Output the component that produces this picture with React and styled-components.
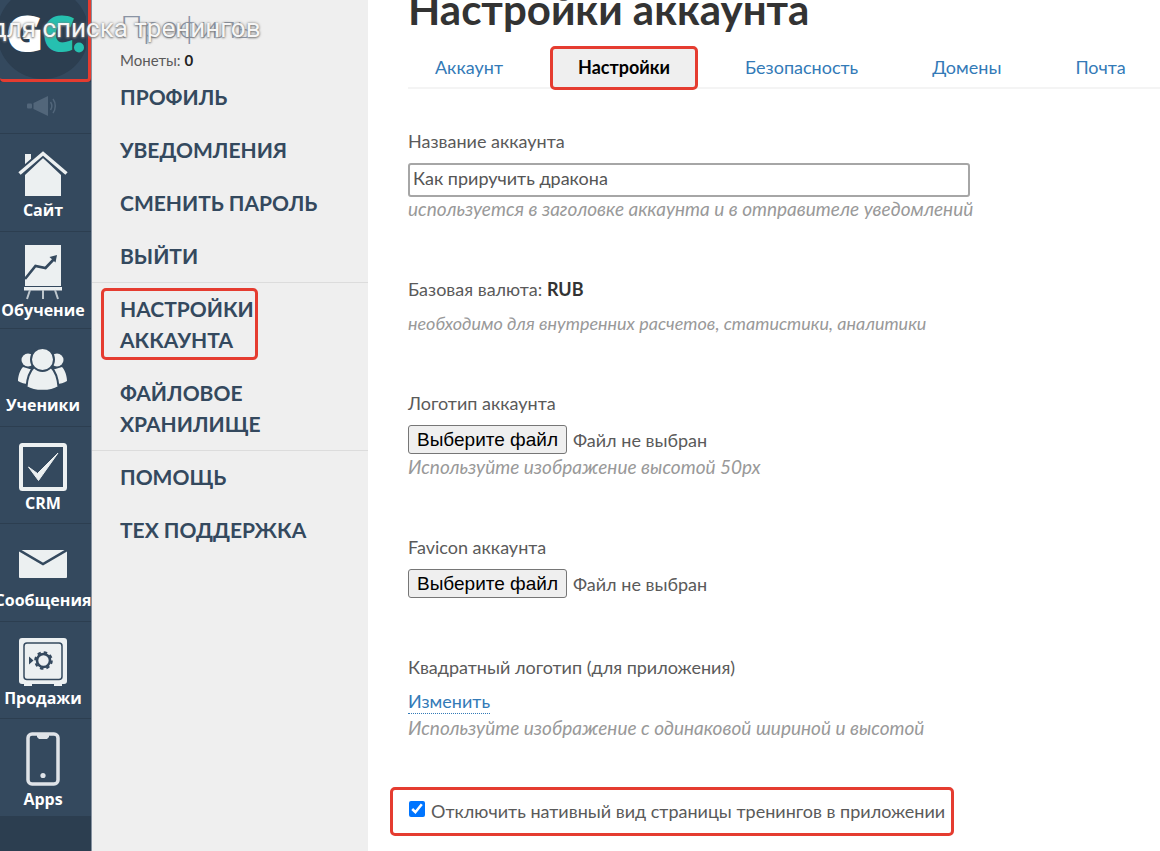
import { useRef, useState } from "react";
import styled, { createGlobalStyle } from "styled-components";

const GlobalStyle = createGlobalStyle`
  * {
    box-sizing: border-box;
  }
  body {
    margin: 0;
    background-color: #fff;
    color: #5a5a5a;
    font-family: "Lato", "Open Sans", sans-serif;
    font-size: 18px;
    line-height: 24px;
  }
`

const HouseIcon = () => (
  <svg width="50" height="46" viewBox="0 0 50 46" fill="#ecf0f1">
    <path d="M7 3h6v6l-6 6z" />
    <path d="M7 24 25 7l18 17v21H7z" />
    <path d="M1.500 22.500 25 2l23.500 20.500" fill="none" stroke="#34495e" strokeWidth="7" />
    <path d="M1.500 22.500 25 2.500l23.500 20" fill="none" stroke="#ecf0f1" strokeWidth="3.500" />
  </svg>
)

const BoardIcon = () => (
  <svg width="40" height="56" viewBox="0 0 40 56">
    <path d="M2 0h36v41H2z" fill="#ecf0f1" />
    <path d="M1 42h38v3.500H1z" fill="#ecf0f1" />
    <path d="M7 45 4 54M20 45v9M32 45l3 9" stroke="#bdc6cc" strokeWidth="2" />
    <path d="M2 34 12.500 21l10 2L32 13" fill="none" stroke="#34495e" strokeWidth="2.600" />
    <path d="m34 10-1.500 7.500-6-5.500z" fill="#34495e" />
  </svg>
)

const UsersIcon = () => (
  <svg width="50" height="43" viewBox="0 0 50 43" fill="#ecf0f1">
    <circle cx="10" cy="12" r="6.500" />
    <circle cx="39" cy="12" r="6.500" />
    <path d="M5 19c-3 3-5 9-5 14 3 2 7 3 10 3l5-14zM44 19c3 3 5 9 5 14-3 2-7 3-10 3l-5-14z" />
    <path d="M16 19h17c5 5 7 13 7.500 20-8 5-24 5-32 0C9 32 11 24 16 19z" stroke="#34495e" strokeWidth="2" />
    <circle cx="24.500" cy="11.500" r="11.500" stroke="#34495e" strokeWidth="2" />
  </svg>
)

const CheckIcon = () => (
  <svg width="48" height="48" viewBox="0 0 48 48">
    <rect x="2" y="2" width="44" height="44" rx="1.500" fill="none" stroke="#ecf0f1" strokeWidth="4" />
    <path d="m9.500 24 9 6.500L39 10 19.500 37.500z" fill="#ecf0f1" stroke="#ecf0f1" />
  </svg>
)

const MailIcon = () => (
  <svg width="48" height="28" viewBox="0 0 48 28">
    <rect width="48" height="28" rx="1" fill="#ecf0f1" />
    <path d="M0 0 24 14 48 0" fill="none" stroke="#34495e" strokeWidth="2.500" />
  </svg>
)

const SafeIcon = () => (
  <svg width="48" height="48" viewBox="0 0 48 48">
    <rect width="48" height="46" rx="3" fill="#ecf0f1" />
    <path d="M5 46h8v2H5zM35 46h8v2h-8z" fill="#ecf0f1" />
    <rect x="5" y="5" width="38" height="36.500" rx="3" fill="none" stroke="#34495e" strokeWidth="1.500" />
    <circle cx="24.500" cy="22.500" r="6.500" fill="none" stroke="#34495e" strokeWidth="2.600" />
    <circle cx="24.500" cy="22.500" r="8.300" fill="none" stroke="#34495e" strokeWidth="2" strokeDasharray="3.500 3.020" />
    <path d="m10 18.500 4.500 4-4.500 4z" fill="#34495e" />
  </svg>
)

const PhoneIcon = () => (
  <svg width="34" height="58" viewBox="0 0 34 58">
    <rect x="2" y="2" width="30" height="50" rx="4" fill="none" stroke="#dfe3e8" strokeWidth="3.500" />
    <path d="M11 2h12v3l-2 2h-8l-2-2z" fill="#dfe3e8" />
    <circle cx="17" cy="43.500" r="2.600" fill="#dfe3e8" />
  </svg>
)

const MegaphoneIcon = () => (
  <svg width="32" height="20" viewBox="0 0 32 20" fill="#52667a">
    <rect x="1" y="7.500" width="5" height="5" rx="1" />
    <path d="M7.500 7 22 0v20L7.500 13z" />
    <path d="M24.500 6c1.700 2.500 1.700 5.500 0 8M27 3c3 4 3 10 0 14" fill="none" stroke="#52667a" strokeWidth="1.500" />
  </svg>
)

const GcLogo = () => (
  <svg width="86" height="80" viewBox="0 0 86 80" fontFamily="Open Sans" fontWeight="800" fontSize="48">
    <circle cx="43" cy="33" r="46" fill="#2c3e50" />
    <text x="7" y="51" fill="#fff" stroke="#fff" strokeWidth="2">G</text>
    <text x="43" y="51" fill="#26c0b0" stroke="#26c0b0" strokeWidth="2">C</text>
    <circle cx="79" cy="47.500" r="5" fill="#26c0b0" />
  </svg>
)

const railItems = [
  { title: "Сайт", Icon: HouseIcon },
  { title: "Обучение", Icon: BoardIcon },
  { title: "Ученики", Icon: UsersIcon },
  { title: "CRM", Icon: CheckIcon },
  { title: "Сообщения", Icon: MailIcon },
  { title: "Продажи", Icon: SafeIcon },
  { title: "Apps", Icon: PhoneIcon },
]

const tabs = ["Аккаунт", "Настройки", "Безопасность", "Домены", "Почта"]

// the native file input stays hidden, the button opens it and the name is shown next to it
const FilePicker = ({ id }) => {
  const input = useRef(null)
  const [fileName, setFileName] = useState("Файл не выбран")
  return (
    <FileRow>
      <input
        ref={input}
        id={id}
        type="file"
        hidden
        onChange={(e) => setFileName(e.target.files[0] ? e.target.files[0].name : "Файл не выбран")}
      />
      <FileButton type="button" onClick={() => input.current.click()}>Выберите файл</FileButton>
      <span>{fileName}</span>
    </FileRow>
  )
}

const App = () => {
  const [activeTab, setActiveTab] = useState("Настройки")
  return (
    <Page>
      <GlobalStyle />
      <Rail>
        <LogoLink href="#" aria-label="GetCourse"><GcLogo /></LogoLink>
        <NewsLink href="#" aria-label="Новости"><MegaphoneIcon /></NewsLink>
        <RailList>
          {railItems.map(({ title, Icon }) => (
            <RailLink href="#" key={title}>
              <RailIcon><Icon /></RailIcon>
              <RailTitle>{title}</RailTitle>
            </RailLink>
          ))}
        </RailList>
      </Rail>

      <Panel>
        <PanelTitle>Профиль</PanelTitle>
        <Coins>Монеты: <b>0</b></Coins>
        <MenuGroup>
          <MenuLink href="#">Профиль</MenuLink>
          <MenuLink href="#">Уведомления</MenuLink>
          <MenuLink href="#">Сменить пароль</MenuLink>
          <MenuLink href="#">Выйти</MenuLink>
        </MenuGroup>
        <MenuGroup $divided>
          <MenuLink href="#">
            Настройки<br />аккаунта
            <MenuMark />
          </MenuLink>
          <MenuLink href="#">Файловое<br />хранилище</MenuLink>
        </MenuGroup>
        <MenuGroup $divided>
          <MenuLink href="#">Помощь</MenuLink>
          <MenuLink href="#">Тех поддержка</MenuLink>
        </MenuGroup>
      </Panel>

      <Main>
        <Title>Настройки аккаунта</Title>
        <Tabs>
          {tabs.map((tab) => (
            <Tab key={tab} href="#" $active={tab === activeTab} onClick={() => setActiveTab(tab)}>{tab}</Tab>
          ))}
        </Tabs>
        <Form>
          <Field>
            <Label htmlFor="name">Название аккаунта</Label>
            <TextInput id="name" type="text" defaultValue="Как приручить дракона" />
            <Hint>используется в заголовке аккаунта и в отправителе уведомлений</Hint>
          </Field>
          <Field>
            <Label as="div">Базовая валюта: <Strong>RUB</Strong></Label>
            <Hint $small>необходимо для внутренних расчетов, статистики, аналитики</Hint>
          </Field>
          <Field>
            <Label htmlFor="logo">Логотип аккаунта</Label>
            <FilePicker id="logo" />
            <Hint>Используйте изображение высотой 50px</Hint>
          </Field>
          <Field>
            <Label htmlFor="favicon">Favicon аккаунта</Label>
            <FilePicker id="favicon" />
          </Field>
          <Field>
            <Label as="div">Квадратный логотип (для приложения)</Label>
            <EditLink href="#">Изменить</EditLink>
            <Hint>Используйте изображение с одинаковой шириной и высотой</Hint>
          </Field>
        </Form>
        <CheckRow>
          <Checkbox type="checkbox" defaultChecked />
          Отключить нативный вид страницы тренингов в приложении
        </CheckRow>
      </Main>

      <Caption>для списка тренингов</Caption>
    </Page>
  )
}

const Page = styled.div`
  position: relative;
  display: flex;
  min-height: 100vh;
  overflow: hidden;
`

const Rail = styled.nav`
  flex: 0 0 92px;
  overflow: hidden;
  background-color: #2c3e50;
  border-right: 1px solid #8591a0;
`

const LogoLink = styled.a`
  display: block;
  height: 82px;
  overflow: hidden;
  background-color: #34495e;
  border: 3px solid #e53c30;
  border-width: 0 3px 3px 0;
  border-radius: 0 0 4px 4px;
`

const NewsLink = styled.a`
  display: flex;
  align-items: center;
  justify-content: center;
  height: 51px;
  padding: 0 8px 3px 0;
  background-color: #34495e;
`

const RailList = styled.div`
  display: flex;
  flex-direction: column;
  height: 683px;
`

const RailLink = styled.a`
  flex: 1;
  display: flex;
  flex-direction: column;
  align-items: center;
  padding: 13px 5px 0 0;
  background-color: #34495e;
  border-top: 1px solid #2c3e50;
  color: #fff;
  text-decoration: none;
`

const RailIcon = styled.span`
  display: flex;
  align-items: center;
  min-height: 54px;
`

const RailTitle = styled.span`
  font-family: "Open Sans", sans-serif;
  font-size: 16px;
  font-weight: 700;
  line-height: 18px;
  white-space: nowrap;
`

const Panel = styled.aside`
  flex: 0 0 276px;
  background-color: #efefef;
`

const PanelTitle = styled.div`
  padding: 10px 0 6px 28px;
  color: #8a94a4;
  font-size: 32px;
  font-weight: 300;
  line-height: 32px;
`

const Coins = styled.div`
  padding: 0 0 0 28px;
  margin-bottom: -2px;
  font-size: 15px;
  b {
    color: #222;
  }
`

const MenuGroup = styled.div`
  box-shadow: ${(props) => (props.$divided ? "inset 0 1px 0 #dcdcdc" : "none")};
`

const MenuLink = styled.a`
  position: relative;
  display: block;
  padding: 11px 28px;
  color: #34495e;
  font-size: 21px;
  font-weight: 700;
  line-height: 31px;
  text-decoration: none;
  text-transform: uppercase;
`

//red frame drawn over the menu item
const MenuMark = styled.span`
  position: absolute;
  left: 9px;
  top: 6px;
  width: 157px;
  height: 72px;
  border: 3px solid #e53c30;
  border-radius: 5px;
`

const Main = styled.main`
  flex: 1;
  min-width: 0;
  margin-top: -12px;
  padding-left: 40px;
`

const Title = styled.h1`
  margin: 0;
  color: #333;
  font-size: 42px;
  font-weight: 700;
  line-height: 42px;
`

const Tabs = styled.div`
  display: flex;
  gap: 20px;
  margin-top: 16px;
  height: 43px;
  border-bottom: 2px solid #f4f4f4;
`

const Tab = styled.a`
  height: 44px;
  padding: ${(props) => (props.$active ? "6px 25px" : "9px 27px")};
  border: ${(props) => (props.$active ? "3px solid #e53c30" : "none")};
  border-radius: 5px;
  background-color: ${(props) => (props.$active ? "#efefef" : "transparent")};
  color: ${(props) => (props.$active ? "#000" : "#337ab7")};
  font-weight: ${(props) => (props.$active ? 700 : 400)};
  text-decoration: none;
`

const Form = styled.form`
  display: flex;
  flex-direction: column;
  gap: 56px;
  margin-top: 40px;
`

const Field = styled.div`
  display: flex;
  flex-direction: column;
  align-items: flex-start;
`

const Label = styled.label`
  margin-bottom: 10px;
`

const Strong = styled.b`
  color: #333;
`

const Hint = styled.p`
  margin: 0;
  color: #999;
  font-size: ${(props) => (props.$small ? "18px" : "19px")};
  font-style: italic;
`

const TextInput = styled.input`
  width: 100%;
  max-width: 562px;
  height: 34px;
  padding: 0 3px 4px;
  border: 2px solid #a6a6a6;
  border-radius: 3px;
  color: #555;
  font: inherit;
`

const FileRow = styled.div`
  display: flex;
  align-items: center;
  gap: 6px;
  margin-bottom: 1px;
`

const FileButton = styled.button`
  height: 29px;
  padding: 0 8px;
  border: 1px solid #767676;
  border-radius: 3px;
  background-color: #efefef;
  color: #000;
  font-family: "Liberation Sans", Arial, sans-serif;
  font-size: 19px;
`

const EditLink = styled.a`
  margin-bottom: 2px;
  border-bottom: 1px dotted #337ab7;
  color: #337ab7;
  text-decoration: none;
`

const CheckRow = styled.label`
  display: flex;
  align-items: center;
  gap: 6px;
  width: fit-content;
  height: 49px;
  margin: 47px 0 15px -18px;
  padding: 0 6px 2px 16px;
  border: 3px solid #e53c30;
  border-radius: 5px;
`

const Checkbox = styled.input`
  width: 16px;
  height: 16px;
  margin: 0 0 4px;
  accent-color: #0075ff;
`

//subtitle that lies over the top left corner
const Caption = styled.div`
  position: absolute;
  left: -9px;
  top: 14px;
  color: #f6f6f6;
  font-family: "Roboto", sans-serif;
  font-size: 26px;
  line-height: 28px;
  text-shadow: 0 0 3px #777, 0 1px 2px #888;
  white-space: nowrap;
`

export default App;
